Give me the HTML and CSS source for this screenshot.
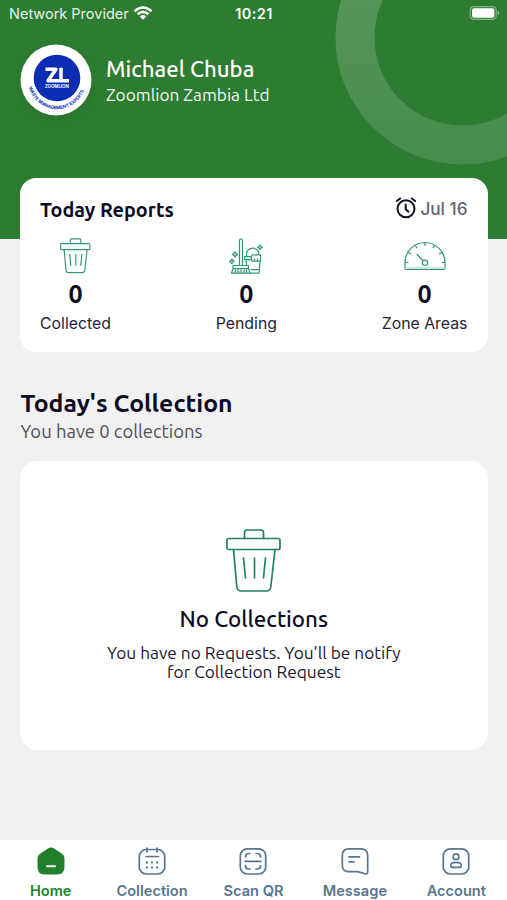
FILE: index.html
```html
<!DOCTYPE html>
<html lang="en">
<head>
<meta charset="utf-8">
<title>Home</title>
<link rel="stylesheet" href="styles.css">
</head>
<body>
<svg class="defs" width="0" height="0" aria-hidden="true">
  <symbol id="bin" viewBox="0 0 56 64">
    <g fill="none" stroke="currentColor" stroke-linecap="round" stroke-linejoin="round">
      <rect x="1" y="9.5" width="53" height="11" rx="1.8"/>
      <path d="M18.500 9.500V3.500q0-2.500 2.500-2.500h14q2.500 0 2.500 2.500v6M7.500 20.500l3.300 37.500q.5 4 4.500 4h25q4 0 4.500-4l4.200-37.500M17.500 29l2 20M28.500 29v20M39.500 29l-2 20"/>
    </g>
  </symbol>
</svg>
<div class="screen">
  <header class="hero">
    <svg class="ring" width="172" height="166" viewBox="0 0 172 166">
      <defs><linearGradient id="fade" x1="0" y1="0" x2="0" y2="1"><stop offset="0" stop-color="#fff" stop-opacity=".22"/><stop offset="1" stop-color="#fff" stop-opacity=".13"/></linearGradient></defs>
      <circle cx="127.500" cy="37.500" r="107.500" fill="none" stroke="url(#fade)" stroke-width="39"/>
    </svg>
    <div class="status">
      <div class="carrier"><span>Network Provider</span>
        <svg width="20" height="14" viewBox="0 0 20 14"><g fill="none" stroke="#fff" stroke-width="2.500"><path d="M1.500 5.200Q10-2.200 18.500 5.200M4.600 8.300Q10 3.500 15.400 8.300"/></g><path d="M10 13.800L6.700 10.400Q10 7.700 13.300 10.400z" fill="#fff"/></svg>
      </div>
      <div class="time">10:21</div>
      <svg class="battery" width="31" height="14" viewBox="0 0 31 14"><rect x="1.200" y=".7" width="26" height="12.600" rx="3.600" fill="none" stroke="#fff" stroke-opacity=".42" stroke-width="1.200"/><rect x="3" y="2.300" width="22.400" height="9.400" rx="2" fill="#fff"/><path d="M28.600 4.700q1.500.6 1.500 2.300t-1.500 2.300z" fill="#fff" fill-opacity=".5"/></svg>
    </div>
    <div class="profile">
      <svg class="logo" width="72" height="72" viewBox="0 0 72 72">
        <circle cx="36" cy="36" r="35.500" fill="#fff"/>
        <circle cx="37" cy="34" r="23.300" fill="#0a2db3"/>
        <path d="M25.500 25.200H36L28 36.800H49M41 23.700V36.800" fill="none" stroke="#fff" stroke-width="3.500" stroke-linejoin="round"/>
        <text class="logo-name" x="36.800" y="44" textLength="24" lengthAdjust="spacingAndGlyphs">ZOOMLION</text>
        <path id="arc" d="M8.500 41A28.900 28.900 0 0 0 65.500 41" fill="none"/>
        <text class="logo-arc"><textPath href="#arc" startOffset="2" textLength="73">WASTE MANAGEMENT EXPERTS</textPath></text>
      </svg>
      <div class="who">
        <div class="name">Michael Chuba</div>
        <div class="company">Zoomlion Zambia Ltd</div>
      </div>
    </div>
  </header>

  <main>
    <section class="reports card">
      <div class="reports-head">
        <h2>Today Reports</h2>
        <div class="date">
          <svg width="22" height="22" viewBox="0 0 22 22" fill="none" stroke="#0d0c25" stroke-width="2" stroke-linecap="round" stroke-linejoin="round"><circle cx="11" cy="11.700" r="8.500"/><path d="M10.700 7.500v4.700l2.800 2.500M1.800 4L5.200 1.500M16.800 1.500L20.200 4"/></svg>
          <span>Jul 16</span>
        </div>
      </div>
      <div class="stats">
        <div class="stat">
          <svg class="stat-icon bin-small" width="31" height="36"><use href="#bin"/></svg>
          <b>0</b><span>Collected</span>
        </div>
        <div class="stat">
          <svg class="stat-icon" width="34" height="36" viewBox="0 0 34 36" fill="none" stroke="#36987a" stroke-width="1.200" stroke-linejoin="round">
            <path d="M10.500 27V2q1.500-2 3 0v25M4 27.500h15.500v3.200H4zM4 30.700L2.500 35.200H21l-1.500-4.500M6 35l.5-3.500M9 35v-3.500M12 35v-3.500M15 35v-3.500M18 35l-.5-3.500"/>
            <path d="M22.500 18.700H15.500v3h7M17 21.700l.6 5.500M31 23L30 35.200H21M21.500 31.700H30M17.500 18.500v-2a6.300 6.300 0 0 1 12.600 0M23 16.800h8.500v6.400H23q-1.500-3.200 0-6.400zM25.500 20.500v2.500M28.500 20.500v2.500"/>
            <g fill="#36987a" fill-opacity=".3"><path d="M6 13.700l1 1.700 1.700 1-1.700 1-1 1.700-1-1.700-1.700-1 1.700-1zM2.900 21l.9 1.400 1.400.9-1.400.9-.9 1.400-.9-1.400-1.400-.9 1.400-.9zM31 7l.9 1.400 1.400.9-1.400.9-.9 1.400-.9-1.400-1.400-.9 1.400-.9z"/></g>
          </svg>
          <b>0</b><span>Pending</span>
        </div>
        <div class="stat">
          <svg class="stat-icon" width="42" height="36" viewBox="0 0 42 36" fill="none" stroke="#36987a" stroke-width="1.200" stroke-linecap="round" stroke-linejoin="round">
            <path d="M1 30V24.500a20 20 0 0 1 40 0V30q0 1.500-1.500 1.500h-37Q1 31.500 1 30zM21 5v2.500M11.500 7.500l1.200 2.300M30.500 7.500l-1.200 2.300M4.500 14.500l2.300 1.300M37.500 14.500l-2.300 1.300M1.500 24.500H4M38 24.500h2.500M13 16.500l6 6"/><circle cx="21" cy="24.800" r="2.700"/><path d="M3 30h36" stroke-width=".5"/>
          </svg>
          <b>0</b><span>Zone Areas</span>
        </div>
      </div>
    </section>

    <h1>Today's Collection</h1>
    <p class="sub">You have 0 collections</p>

    <section class="empty card">
      <svg class="bin-large" width="56" height="64"><use href="#bin"/></svg>
      <h3>No Collections</h3>
      <p>You have no Requests. You’ll be notify<br>for Collection Request</p>
    </section>
  </main>

  <nav>
    <a class="tab active">
      <svg width="28" height="28" viewBox="0 0 28 28"><path d="M11.300 1.300q2.700-1.600 5.400 0l8 5.200q2.800 1.900 2.800 5.200V20q0 7.500-7.500 7.500H8Q.5 27.500.5 20v-8.300q0-3.300 2.800-5.200z" fill="currentColor"/><path d="M10 19.300h8" stroke="#fff" stroke-width="2" stroke-linecap="round"/></svg>
      <span>Home</span>
    </a>
    <a class="tab">
      <svg width="28" height="28" viewBox="0 0 28 28" fill="none" stroke="currentColor" stroke-width="1.700" stroke-linecap="round"><rect x="1.300" y="2.500" width="25.400" height="24.500" rx="7"/><path d="M9 1v4M19 1v4M8 9.500h12.500"/><path d="M9 15.500h.01M14 15.500h.01M19 15.500h.01M9 20.500h.01M14 20.500h.01M19 20.500h.01" stroke-width="2.300"/></svg>
      <span>Collection</span>
    </a>
    <a class="tab">
      <svg width="28" height="28" viewBox="0 0 28 28" fill="none" stroke="currentColor" stroke-width="1.700" stroke-linecap="round"><rect x="1.300" y="1.800" width="25.400" height="25.200" rx="7"/><path d="M6.500 10v-.5q0-3 3-3H11M17 6.500h1.500q3 0 3 3v.5M6.500 18.500v.5q0 3 3 3H11M17 22h1.500q3 0 3-3v-.5M6 14.300h16"/></svg>
      <span>Scan QR</span>
    </a>
    <a class="tab">
      <svg width="28" height="28" viewBox="0 0 28 28" fill="none" stroke="currentColor" stroke-width="1.700" stroke-linecap="round" stroke-linejoin="round"><path d="M8 1.800h12q6.700 0 6.700 6.700v16q0 3-2.800 2.300l-5.400-1.700q-1-.4-2.500-.4H8q-6.700 0-6.700-6.500V8.500q0-6.700 6.700-6.700zM8 9.800h10.500M8 14.800h5"/></svg>
      <span>Message</span>
    </a>
    <a class="tab">
      <svg width="28" height="28" viewBox="0 0 28 28" fill="none" stroke="currentColor" stroke-width="1.700"><rect x="1.300" y="1.800" width="25.400" height="25.200" rx="7"/><circle cx="14" cy="9.700" r="2.800"/><path d="M14 15.300c3 0 5.300 1.300 5.300 3.100 0 1.500-1 2-2.500 2h-5.600c-1.500 0-2.500-.5-2.500-2 0-1.800 2.300-3.100 5.300-3.100z"/></svg>
      <span>Account</span>
    </a>
  </nav>
</div>
</body>
</html>
```
FILE: styles.css
```css
* { box-sizing: border-box; margin: 0; padding: 0; }
body { background: #f1f1f1; color: #0d0c25; font-family: Ubuntu, "Noto Sans", sans-serif; }
.defs { display: block; }
.screen { width: 507px; height: 900px; display: flex; flex-direction: column; overflow: hidden; }
.hero { position: relative; flex: none; height: 239px; background: #2d7c31; color: #fff; }
.ring { position: absolute; top: 0; right: 0; }
.status { position: relative; height: 28px; padding: 0 7px 0 9px; display: grid; grid-template-columns: 1fr auto 1fr; align-items: center; font-family: Inter, sans-serif; font-size: 14.500px; line-height: 28px; }
.carrier { display: flex; align-items: center; gap: 4px; color: #e6f0e6; height: 26px; }
.carrier svg { margin-bottom: 2px; }
.time { font-weight: 600; letter-spacing: .4px; margin-left: -1px; }
.battery { justify-self: end; margin-bottom: 2px; }
.profile { position: relative; display: flex; align-items: center; gap: 14px; padding: 16px 20px 0; }
.logo { border-radius: 50%; box-shadow: 0 4px 14px rgba(0, 0, 0, .08); }
.logo-name { font: 700 4.600px Inter, sans-serif; fill: #fff; text-anchor: middle; }
.logo-arc { font: 700 4.600px Inter, sans-serif; fill: #0a2db3; }
.who { padding-top: 2px; }
.name { font-size: 22.200px; line-height: 28px; font-weight: 500; white-space: nowrap; }
.company { font-size: 17.250px; line-height: 24px; white-space: nowrap; color: #f0f7f0; }
main { flex: 1; padding: 0 20px; margin-top: -61px; position: relative; }
.card { background: #fff; border-radius: 16px; width: 467.500px; }
.reports { height: 174px; padding: 18px 20px 0; }
.reports-head { display: flex; justify-content: space-between; height: 26px; align-items: center; }
h2 { font-size: 19.800px; line-height: 26px; font-weight: 700; padding-top: 1px; }
.date { display: flex; gap: 3px; align-items: center; color: #65656d; font: 500 17.200px/24px Inter, sans-serif; }
.date svg { margin-bottom: 2px; }
.stats { display: flex; justify-content: space-between; margin-top: 16px; }
.stat { display: flex; flex-direction: column; align-items: center; font-family: Inter, sans-serif; font-size: 15.850px; }
.stat b { font: 700 25px/30px Ubuntu, "Noto Sans", sans-serif; margin-top: 5px; }
.stat span { line-height: 22px; margin-top: 4px; color: #24243a; }
.bin-small { color: #36987a; stroke-width: 2.100; }
.bin-large { color: #21845f; stroke-width: 1.700; }
h1 { font-size: 24.800px; line-height: 32px; margin: 35px 0 0 .5px; font-weight: 700; }
.sub { font-size: 18.450px; line-height: 24px; color: #505057; margin-left: .5px; }
.empty { height: 289px; margin-top: 18px; border-radius: 18px; display: flex; flex-direction: column; align-items: center; padding-top: 68px; }
h3 { font-size: 22.350px; font-weight: 500; line-height: 30px; margin-top: 11px; }
.empty p { font-size: 17.300px; line-height: 19px; margin-top: 9px; text-align: center; white-space: nowrap; color: #19182f; }
nav { position: relative; flex: none; height: 60px; display: grid; grid-template-columns: repeat(5, 1fr); background: #fff; padding-top: 7px; }
.tab { display: flex; flex-direction: column; align-items: center; color: #587690; font: 600 14.600px/20px Inter, sans-serif; }
.tab span { margin-top: 6px; }
.active { color: #23802a; }
```
